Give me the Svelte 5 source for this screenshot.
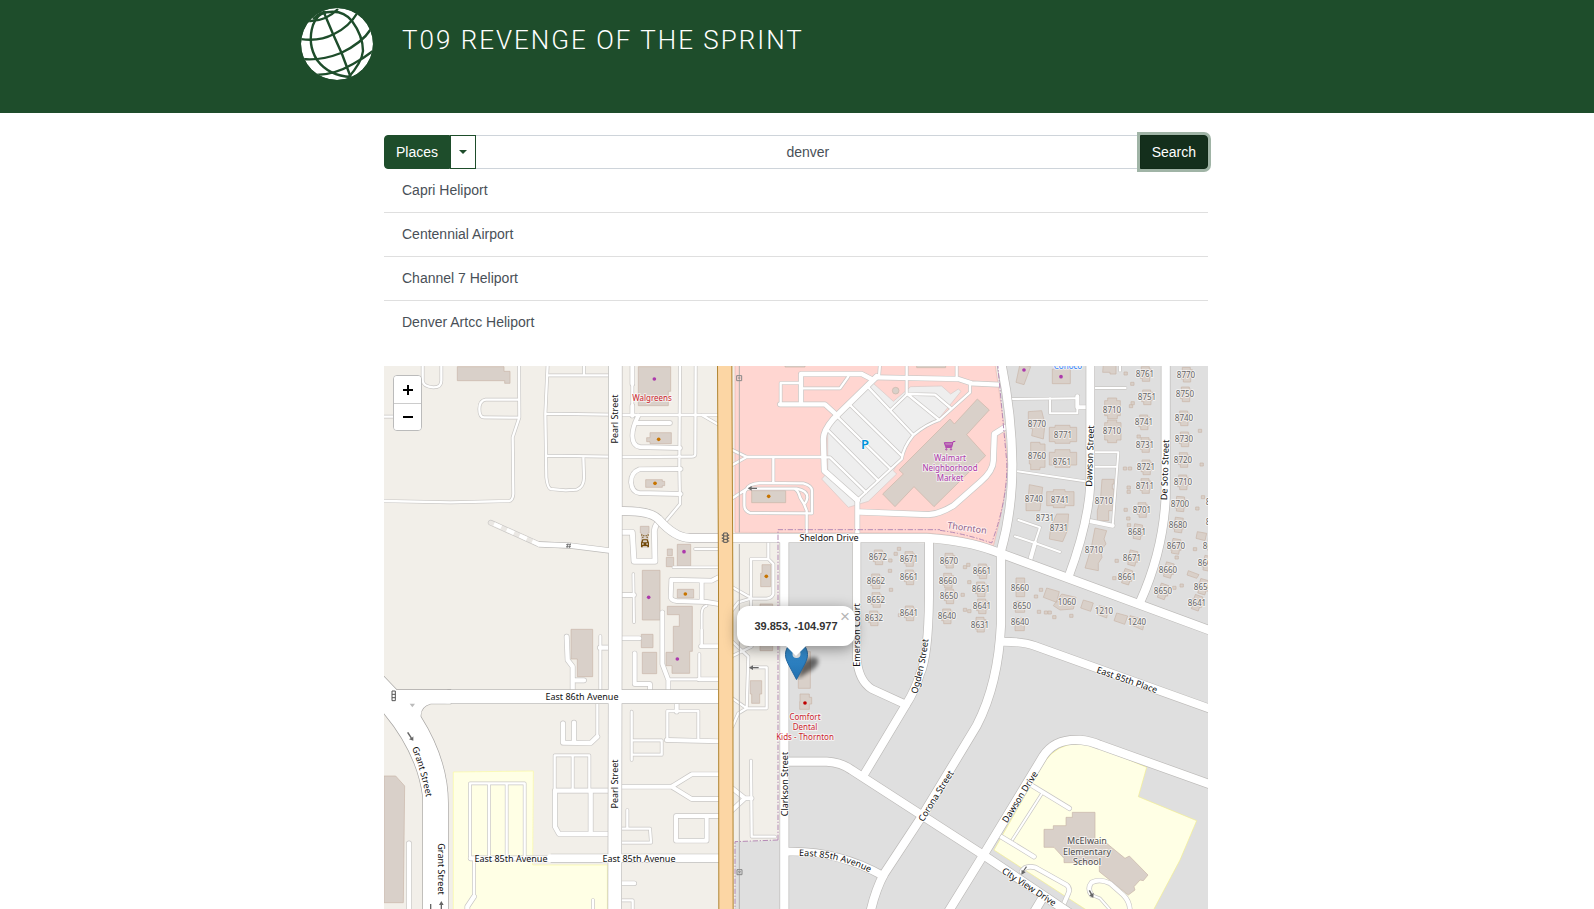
<script>
  let query = $state('denver');
  const places = ['Capri Heliport', 'Centennial Airport', 'Channel 7 Heliport', 'Denver Artcc Heliport'];

  // Survey sheets: each one has its own origin and is drawn at a third of its units.
  const sheets = {
    A: [384, 364], B: [600, 364], C: [780, 364], D: [980, 364],
    E: [384, 630], F: [600, 630], G: [780, 630], H: [980, 630]
  };
  const place = (s) => `translate(${sheets[s][0]} ${sheets[s][1]}) scale(${1 / 3})`;
  const px = (s, x) => Math.round(sheets[s][0] + x / 3);
  const py = (s, y) => Math.round(sheets[s][1] + y / 3);

  // [sheet, width, path]
  const service = [
    ['A', 7, 'M116 0V50Q118 68 148 70Q172 70 172 50V0M405 0L406 160L386 220L388 390Q386 410 375 411L200 415L0 411M405 107H305Q286 110 286 135Q286 160 300 160L405 161M0 158H30'],
    ['A', 7, 'M491 0L484 150L487 340Q490 370 500 375L545 379L578 377Q600 370 600 340L598 278M495 34H675M600 0V34M484 149L675 152M487 275L675 278'],
    ['B', 7, 'M240 0L238 310L240 420L200 468M68 153H352M287 0L286 270Q286 278 275 278L66 279M305 153L352 180M97 60V125'],
    ['B', 12, 'M97 0V60M97 125V155M115 155Q97 190 97 215Q97 245 120 249L240 252M105 177H210M242 315L118 316Q93 325 93 355Q96 385 118 387L242 390'],
    ['B', 15, 'M68 505H97L102 592H165L163 500Q165 485 175 475'],
    ['B', 6, 'M285 555H357M220 610H357M100 630L102 775M320 725Q305 728 305 750V845'],
    ['B', 12, 'M68 693H102M187 745V900L205 948V978M66 823H118M355 640L335 650L214 647L212 700Q215 710 230 711L320 714L357 720M305 650V712'],
    ['B', 7, 'M397 258L440 279L397 303M440 279H665M520 279V357M397 403L440 375Q445 360 480 357L610 358Q636 365 636 380V448L450 447Q433 440 433 425V390Q433 380 440 375M445 374H590Q622 380 622 400Q620 415 612 420L620 440V505M585 375Q595 380 600 400L612 420'],
    ['B', 7, 'M505 535V585M453 730V585H505L520 600V690Q515 703 500 704L455 703L397 670M455 703L415 715L397 738'],
    ['C', 13, 'M0 121H135L172 155M63 120V30H245L280 48M290 40L535 45L575 58L655 62M232 408V510'],
    ['C', 7, 'M300 0L297 38M380 0V90M530 0V45M2 121V57H60M65 73H180L205 38'],
    ['C', 7, 'M265 70L400 213M212 125L365 275M172 158L332 315M145 200L295 350M125 280H150L258 385M232 408L365 285Q370 250 400 213Q440 180 478 168L570 85V62M332 138L382 90L465 92L512 132M382 90L478 168'],
    ['C', 16, 'M290 38L160 165Q130 200 130 225L133 320L232 408M240 444L445 452Q480 450 520 425L600 355Q640 320 640 290L643 210L675 190'],
    ['D', 6, 'M92 105L290 103M210 103V148H292V130M345 72H437M420 0V20M113 322L315 352M345 265H415L398 485M345 308H412M115 468L180 490L165 535M105 517L165 537L240 564'],
    ['D', 12, 'M292 97V130H320M398 485L325 470M165 537L150 590'],
    ['E', 13, 'M548 20L551 90L566 110V180M575 151H600M648 53H675M640 320L620 339L537 338V280M570 278V338M675 482H513V590L525 612H675M620 482V612M260 685H490M75 640V845M270 800L250 830V845'],
    ['E', 7, 'M649 18V180M640 221V320M512 376H616V480M512 376V480M566 376V480M422 680V460H258V685M315 460V680M368 460V680M270 690V800M627 810V845'],
    ['F', 7, 'M305 0V48M205 148H297M298 72V148M95 245V390M95 331H185V374H95M295 325V243H202V325M82 540V594M66 596H150L153 638H66M66 811H98V845M453 392L455 620H525M397 205L440 235L415 250L397 290M440 235H500V112H455M440 235L445 80L397 35M397 78L455 50'],
    ['F', 12, 'M303 49H357M297 148H357M104 70V162H150V180M230 221V245M200 330L357 334M66 470H215L275 433H357M215 470L275 507H357M357 558H228V632H320V558M66 760H103M397 475L435 505L397 540M435 505H455'],
    ['H', 12, 'M145 460L268 535M55 615L162 680M125 725Q135 705 165 712L260 765Q272 775 265 790L250 825M335 795Q320 775 335 757Q360 745 390 760L430 795Q450 815 450 845'],
    ['H', 6, 'M185 492L98 628M335 795L360 805L395 845']
  ];
  const streets = [
    ['A', 14, 'M465 541L560 545L680 560'],
    ['B', 24, 'M66 441Q150 440 175 465Q225 522 270 522H357'],
    ['C', 25, 'M-143 522H440Q560 530 640 560L1300 803'],
    ['B', 25, 'M553 535V1700'],
    ['C', 23, 'M230 522V880Q235 950 275 975L378 1022'],
    ['C', 24, 'M447 522V700Q445 880 420 930Q405 980 378 1022L252 1232'],
    ['C', 25, 'M663 565V780Q655 960 590 1085L425 1358L312 1530Q285 1580 270 1650'],
    ['C', 25, 'M663 560Q697 440 697 300Q695 150 664 0'],
    ['D', 24, 'M331 0V360Q325 480 265 640'],
    ['D', 25, 'M557 0V400Q550 560 480 715'],
    ['H', 24, 'M70 35Q130 35 165 48L700 240'],
    ['G', 25, 'M25 395H140Q185 398 215 420L610 675L870 850'],
    ['G', 23, 'M20 665Q170 660 310 738'],
    ['H', 25, 'M-95 845L12 672L190 378Q225 325 300 330Q330 332 360 345L690 463M190 800L160 850'],
    ['E', 40, 'M190 200H1005'],
    ['E', 24, 'M500 685H1005'],
    ['A', 39, 'M694 0V660L692 1700']
  ];
  const grant = 'M-20 120L0 140L38 180H200V221H140Q108 230 110 260Q192 390 192 520V860H117V500Q100 370 0 250L-20 230Z';

  const buildings = [
    ['A', 'M220 8H360V22H378V58H362V50H220ZM561 796H626V938H580V885H561Z'],
    ['B', 'M115 8H212V82H205V125H115ZM150 206H214V239H150V233H140V221H150ZM137 347H187V352H194V365H187V370H137ZM121 487H147V507H144V549H124V507H121ZM202 555H217V575H202ZM199 580H221V608H199ZM232 541H272V606H232ZM127 619H180V768H127ZM232 676H281V702H232Z'],
    ['B', 'M202 727H277V862H269V928H216V905H198V865H220V787H238V752H202ZM124 811H159V851H124ZM127 865H170V929H127ZM455 380H557V416H455ZM486 602H512V668H482V628H486ZM480 720H518V860H480Z'],
    ['F', 'M451 152H485V192H479V220H455V192H451ZM595 65H631V175H595ZM600 192H628V202H635V222H628V238H599V215H600Z'],
    ['C', 'M592 105L628 138L560 212L617 275L462 428L402 368L345 428L308 390L370 330L357 318L510 165L523 180ZM15 0H75V9H15ZM410 0H497V11H410Z'],
    ['D', 'M120 0L152 8L132 62L108 55ZM217 15H271V59H217ZM370 0H408V30H390V25H368ZM145 143L185 140L195 180L190 225L155 215L158 195L145 190ZM208 190H225V184H270V190H290V233H270V238H225V233H208ZM152 235H180V240H195V310H180V317H152V300H148V265H152ZM208 265H225V257H270V265H290V303H270V310H225V303H208ZM148 362L188 370L180 440H138V400H145ZM200 383H220V377H255V383H282V425H255V431H220V425H200ZM230 450L266 450L262 500L248 533L208 525L212 490Z'],
    ['D', 'M383 102H410V110H421V155H412V164H383V155H374V110H383ZM383 168H410V176H423V228H410V236H383V228H374V176H383ZM366 346H402V360H397V375H402V400H394V420H398V440H386V470H352V440L362 400ZM345 492L380 500L372 525L378 540L362 560L366 580L355 598V620L315 612L325 580L335 545Z'],
    ['D', 'M200 672L238 683L230 715L190 700ZM310 708L340 717L332 742L302 732ZM410 747L443 756L434 781L402 770ZM358 725L385 732L380 762L350 750ZM450 755L495 768L488 798L448 780ZM245 690L288 700L280 735L240 738L220 725ZM625 620L657 632L650 643L621 633ZM652 503L680 508L675 530L648 523ZM108 642H134V698H108ZM106 712H134V745H106ZM105 762H133V800H105Z'],
    ['E', 'M0 438H35L62 468L58 818H0Z'],
    ['H', 'M277 547H345V640H380L435 685L448 678L504 735L490 752L480 750L462 770L465 780L445 795L358 725V690H345V698H252V685L222 652H192V598H220V587H258V562H277Z']
  ];
  const sheds = [
    ['C', 326, 585], ['C', 342, 565], ['C', 352, 550], ['C', 325, 616], ['C', 328, 673], ['C', 550, 605], ['C', 560, 598], ['C', 563, 650], ['C', 543, 688], ['C', 550, 733], ['C', 563, 737], ['C', 355, 749],
    ['D', 432, 24], ['D', 452, 55], ['D', 448, 122], ['D', 453, 113], ['D', 471, 213], ['D', 430, 309], ['D', 445, 309], ['D', 441, 366], ['D', 441, 379], ['D', 432, 433], ['D', 440, 459], ['D', 442, 479], ['D', 405, 586], ['D', 398, 638], ['D', 655, 196], ['D', 660, 297], ['D', 664, 395], ['D', 647, 429], ['D', 640, 551], ['D', 585, 576], ['D', 578, 667], ['D', 600, 660], ['D', 178, 673], ['D', 163, 693], ['D', 172, 739], ['D', 193, 741], ['D', 204, 741], ['D', 218, 755], ['D', 269, 751]
  ];
  // [sheet, x, y, number, has its own house footprint, tilt]
  const houses = [
    ['C', 295, 580, '8672', 1], ['C', 387, 585, '8671', 1], ['C', 287, 652, '8662', 1], ['C', 388, 640, '8661', 1], ['C', 288, 708, '8652', 1], ['C', 388, 748, '8641', 1], ['C', 281, 763, '8632', 1],
    ['C', 507, 590, '8670', 1], ['C', 607, 622, '8661', 1], ['C', 503, 650, '8660', 1], ['C', 602, 676, '8651', 1], ['C', 508, 697, '8650', 1], ['C', 605, 727, '8641', 1], ['C', 500, 757, '8640', 1], ['C', 600, 782, '8631', 1],
    ['D', 496, 30, '8761', 1], ['D', 619, 32, '8770', 1], ['D', 500, 100, '8751', 1], ['D', 616, 91, '8750', 1], ['D', 397, 137, '8710', 0], ['D', 491, 175, '8741', 1], ['D', 611, 163, '8740', 1], ['D', 397, 202, '8710', 0], ['D', 495, 243, '8731', 1], ['D', 613, 226, '8730', 1],
    ['D', 170, 180, '8770', 0], ['D', 248, 212, '8771', 0], ['D', 170, 276, '8760', 0], ['D', 247, 294, '8761', 0], ['D', 498, 310, '8721', 1], ['D', 610, 288, '8720', 1], ['D', 495, 366, '8711', 1], ['D', 608, 355, '8710', 1],
    ['D', 161, 406, '8740', 0], ['D', 240, 407, '8741', 0], ['D', 195, 462, '8731', 0], ['D', 238, 492, '8731', 0], ['D', 373, 410, '8710', 0], ['D', 486, 438, '8701', 1], ['D', 600, 420, '8700', 1, 5], ['D', 595, 483, '8680', 1, 8],
    ['D', 472, 503, '8681', 1, 10], ['D', 343, 558, '8710', 0], ['D', 587, 547, '8670', 1, 10], ['D', 457, 582, '8671', 1, 14], ['D', 440, 638, '8661', 1, 18], ['D', 565, 618, '8660', 1, 16], ['D', 548, 682, '8650', 1, 20],
    ['D', 668, 668, '8650', 1, 16], ['D', 650, 716, '8641', 1, 20], ['D', 121, 671, '8660', 0], ['D', 125, 726, '8650', 0], ['D', 119, 773, '8640', 0], ['D', 260, 715, '1060', 0], ['D', 372, 742, '1210', 0], ['D', 470, 775, '1240', 0],
    ['D', 704, 415, '8691', 1], ['D', 706, 473, '8681', 1], ['D', 697, 545, '8671', 1], ['D', 682, 598, '8661', 1, 12]
  ];
  // [sheet, x, y, angle, name]
  const names = [
    ['A', 694, 165, -90, 'Pearl Street'], ['E', 693, 462, -90, 'Pearl Street'], ['E', 594, 201, 0, 'East 86th Avenue'], ['E', 380, 686, 0, 'East 85th Avenue'], ['E', 764, 686, 0, 'East 85th Avenue'],
    ['E', 170, 717, 90, 'Grant Street'], ['C', 147, 523, 0, 'Sheldon Drive'], ['F', 555, 463, -90, 'Clarkson Street'], ['C', 232, 812, -90, 'Emerson Court'],
    ['G', 468, 497, -58, 'Corona Street'], ['H', 120, 502, -58, 'Dawson Drive'], ['H', 440, 150, 19, 'East 85th Place'], ['H', 148, 770, 33, 'City View Drive'],
    ['D', 329, 277, -88, 'Dawson Street'], ['D', 554, 317, -88, 'De Soto Street']
  ];
  const pois = [
    ['B', 155, 101, 'Walgreens', 'red'], ['F', 615, 261, 'Comfort', 'red'], ['F', 615, 291, 'Dental', 'red'], ['F', 615, 321, 'Kids - Thornton', 'red'],
    ['C', 509, 283, 'Walmart', 'violet'], ['C', 509, 313, 'Neighborhood', 'violet'], ['C', 509, 343, 'Market', 'violet'],
    ['D', 265, 6, 'Conoco', 'blue'], ['H', 320, 632, 'McElwain', 'grey'], ['H', 320, 665, 'Elementary', 'grey'], ['H', 320, 697, 'School', 'grey']
  ];
  const dots = [
    ['B', 163, 45, '#ac39ac'], ['B', 176, 226, '#c77400'], ['B', 165, 358, '#c77400'], ['B', 256, 690, '#c77400'], ['B', 506, 397, '#c77400'], ['B', 499, 637, '#c77400'],
    ['B', 252, 563, '#ac39ac'], ['B', 146, 700, '#ac39ac'], ['F', 232, 87, '#ac39ac'], ['F', 615, 219, '#bf0000'], ['D', 132, 18, '#ac39ac'], ['D', 243, 38, '#ac39ac']
  ];
</script>

<div class="page">
  <header>
    <div class="bar">
      <svg class="logo" viewBox="0 0 72 72" aria-hidden="true">
        <circle cx="36" cy="36" r="36" fill="#fff" />
        <g fill="none" stroke="#1e4d2b" stroke-width="2.4">
          <path d="M21 0L32 26L41 46L50 70" />
          <path d="M25 4Q16 6 12 17Q6 36 16 52Q28 68 50 69" />
          <path d="M19 6Q40 -1 51 13Q62 28 62 43Q61 54 47 70" />
          <path d="M7 13Q24 14 37 1" />
          <path d="M-1 31Q18 34 33 26Q48 19 57 4" />
          <path d="M1 51Q20 53 40 45Q61 35 70 21" />
          <path d="M15 67Q33 67 52 56Q63 50 72 43" />
          <path d="M12 11L20 4" />
        </g>
      </svg>
      <h1>T09 REVENGE OF THE SPRINT</h1>
    </div>
  </header>

  <main>
    <form class="search" onsubmit={(e) => e.preventDefault()}>
      <button type="button" class="kind">Places</button>
      <button type="button" class="toggle" aria-label="Choose search type"><span class="caret"></span></button>
      <input type="text" aria-label="Search text" bind:value={query} />
      <button type="submit" class="go">Search</button>
    </form>

    <ul class="results">
      {#each places as p}
        <li>{p}</li>
      {/each}
    </ul>

    <section class="map" aria-label="Map">
      <svg class="tiles" viewBox="384 366 824 543" preserveAspectRatio="xMidYMin slice">
        <rect x="0" y="0" width="1600" height="1600" fill="#f2efe9" />
        <g stroke-width="2">
          <path transform={place('C')} d="M5 520L640 547L690 300L650 0H1300V1700H5Z" fill="#dfdfdf" />
          <path transform={place('F')} d="M405 635L545 630V850H405Z" fill="#dfdfdf" />
          <path transform={place('C')} d="M-135 0H645L672 180L683 290Q680 400 640 547Q560 515 440 507L-135 505Z" fill="#ffd6d1" stroke="#e8b9b3" />
          <path transform={place('C')} d="M280 58L340 112L392 68L485 66L512 90L535 75L543 82L480 160L400 210L360 285L340 320L350 330L265 412L205 430L125 345L143 325V190Z" fill="#eee" stroke="#d8c8c6" />
          <path transform={place('E')} d="M208 426L448 423L446 705H670V860H208Z" fill="#ffffe5" stroke="#fafaa0" />
          <path transform={place('H')} d="M42 660L190 400Q230 340 300 340Q330 340 360 352L500 412L475 500L650 572L600 690L515 850H335Z" fill="#ffffe5" stroke="#f5f08c" />
        </g>
        <g fill="#d9d0c9" stroke="#c8b5a8" stroke-width="2">
          {#each buildings as [s, d]}<path transform={place(s)} {d} />{/each}
          {#each sheds as [s, x, y]}<path transform={place(s)} d="M{x} {y}h10v9h-10z" />{/each}
          {#each houses as [s, x, y, n, own, tilt]}
            {#if own}<path transform="{place(s)} rotate({tilt ?? 0} {x} {y})" d="M{x - 12} {y - 22}h24v7h6v24h-5v13h-22v-9h-6v-20h3z" />{/if}
          {/each}
          <circle transform={place('C')} cx="347" cy="80" r="10" />
        </g>

        <g fill="none" stroke-linecap="round" stroke-linejoin="round">
          {#each service as [s, w, d]}<path transform={place(s)} {d} stroke="#c9c7c5" stroke-width={w + 4} />{/each}
          {#each service as [s, w, d]}<path transform={place(s)} {d} stroke="#fff" stroke-width={w} />{/each}
        </g>
        <g fill="none" stroke-linejoin="round">
          <path transform={place('A')} d="M320 476L465 541L560 545" stroke="#c9c7c5" stroke-width="17" stroke-linecap="round" />
          <path transform={place('A')} d="M320 476L465 541L560 545" stroke="#ebe8e4" stroke-width="13" stroke-linecap="round" />
          <path transform={place('A')} d="M330 480L465 541L560 545" stroke="#fff" stroke-width="12" stroke-dasharray="24 18" />
          {#each streets as [s, w, d]}<path transform={place(s)} {d} stroke="#bdbbb9" stroke-width={w + 4} />{/each}
          <path transform={place('E')} d={grant} stroke="#a9a7a5" stroke-width="4" />
          {#each streets as [s, w, d]}<path transform={place(s)} {d} stroke="#fff" stroke-width={w} stroke-linecap="round" />{/each}
          <path transform={place('E')} d={grant} fill="#fff" />
          <path transform={place('B')} d="M418 0V505M418 540V1700" stroke="#b3b0ae" stroke-width="3" />
          <path transform={place('B')} d="M374 0L377 660L378 1700" stroke="#b08430" stroke-width="46" />
          <path transform={place('B')} d="M374 0L377 660L378 1700" stroke="#fcd6a4" stroke-width="40" />
          <g stroke="#b58ab5" stroke-width="3" stroke-dasharray="16 5 4 5">
            <path transform={place('B')} d="M534 1428V497H1020M534 1428L405 1433V1700" />
            <path transform={place('C')} d="M480 499Q560 510 635 537Q685 400 680 290L653 0" />
          </g>
        </g>

        <g fill="#666" stroke="none">
          <path transform={place('B')} d="M443 373l12-7v5h16v4h-16v5z" />
          <path transform={place('F')} d="M447 113l12-7v5h17v4h-17v5z" />
          <path transform={place('E')} d="M88 332l-13-4 5-3-11-17 4-2 11 17 4-4zM172 813l7 12h-5v20h-4v-20h-5zM138 822h4v23h-4z" />
          <path transform={place('E')} d="M77 221h16l-8 11z" fill="#bbb" />
          <path transform={place('H')} d="M124 734l1-15 4 3 9-13 3 2-9 13 5 3zM340 803l-12-6 4-4-6-11 4-2 6 11 5-2z" />
        </g>
        <g fill="none" stroke="#555" stroke-width="3">
          <path transform={place('B')} d="M371 507h11v28h-11zM367 511v5M367 520v5M367 529v4M386 511v5M386 520v5M386 529v4M371 516h11M371 526h11" />
          <path transform={place('E')} d="M24 183h10v29h-10zM24 193h10M24 203h10" />
          <path transform={place('B')} d="M410 35h15v15h-15zM414 42h7M411 1517h15v15h-15zM415 1521l7 7M422 1521l-7 7" stroke="#888" />
          <path transform={place('A')} d="M546 542h15M546 548h15M552 538l-3 14M559 538l-3 14" stroke-width="2" />
        </g>
        <g transform={place('B')} fill="#734a08">
          <path d="M127 526h16l4 10v14h-5v-4h-14v4h-5v-14zM130 529l-2 6h14l-2-6zM126 538v4h5v-4zM139 538v4h5v-4z" fill-rule="evenodd" />
          <path d="M124 511h3v4h-3zM130 513h3v4h-3zM137 513h3v4h-3zM143 511h3v4h-3zM127 518h3v4h-3zM140 518h3v4h-3z" />
        </g>
        <g transform={place('C')} fill="none" stroke="#ac39ac" stroke-width="3">
          <path d="M526 232l-7 1-4 17h-19M518 236h-25l4 12h18M495 240h22M496 244h20" />
          <circle cx="499" cy="256" r="2" /><circle cx="513" cy="256" r="2" />
        </g>
        {#each dots as [s, x, y, c]}<circle transform={place(s)} cx={x} cy={y} r="5.5" fill={c} />{/each}

        {#each houses as [s, x, y, n]}<text class="num" x={px(s, x)} y={py(s, y) + 3}>{n}</text>{/each}
        {#each names as [s, x, y, a, n]}
          <text class="street" transform="translate({px(s, x)} {py(s, y)}) rotate({a})" y="3">{n}</text>
        {/each}
        <path id="ave" d="M799 856Q842 856 878 877" fill="none" />
        <text class="street start"><textPath href="#ave">East 85th Avenue</textPath></text>
        <path id="ogden" d="M917 694Q926 664 930 627" fill="none" />
        <text class="street start"><textPath href="#ogden">Ogden Street</textPath></text>
        <path id="grant" d="M412 748Q421 770 427 802" fill="none" />
        <text class="street start"><textPath href="#grant">Grant Street</textPath></text>
        <text class="street town" transform="translate(967 528) rotate(8)" y="3">Thornton</text>
        {#each pois as [s, x, y, n, c]}<text class="poi {c}" x={px(s, x)} y={py(s, y) + 3}>{n}</text>{/each}
        <text class="parking" x="865" y="449">P</text>
      </svg>

      <svg class="pin" viewBox="0 0 50 41" aria-hidden="true">
        <defs>
          <linearGradient id="pinfill" x1="0" y1="0" x2="0" y2="1">
            <stop offset="0" stop-color="#3a93d4" /><stop offset="1" stop-color="#2170b0" />
          </linearGradient>
          <filter id="soft" x="-50%" y="-50%" width="200%" height="200%"><feGaussianBlur stdDeviation="2" /></filter>
        </defs>
        <path d="M13 40L17 26Q25 16 33 19Q37 25 28 31Z" fill="#000" opacity=".55" filter="url(#soft)" />
        <path d="M12.500 3C6 3 1.500 9 1.500 15.500C1.500 19 2.500 21 4 24.500L12.500 40.500L21 24.500C22.500 21 23.500 19 23.500 15.500C23.500 9 19 3 12.500 3Z" fill="url(#pinfill)" stroke="#2468a0" />
        <circle cx="12.500" cy="15" r="4" fill="#e4e4e4" />
      </svg>

      <div class="popup">
        <strong>39.853, -104.977</strong>
        <button type="button" class="close" aria-label="Close popup">×</button>
      </div>

      <div class="zoom">
        <button type="button" aria-label="Zoom in"><svg viewBox="0 0 12 12"><path d="M6 1V11M1 6H11" /></svg></button>
        <button type="button" aria-label="Zoom out"><svg viewBox="0 0 12 12"><path d="M1 6H11" /></svg></button>
      </div>
    </section>
  </main>
</div>

<style>
  :global(body) { margin: 0; background: #fff; }
  * { box-sizing: border-box; }
  .page {
    display: flex;
    flex-direction: column;
    min-height: 100vh;
    font: 14px/20px "Liberation Sans", Arial, sans-serif;
    color: #495057;
  }
  button, input { font: inherit; margin: 0; }
  header { background: #1e4d2b; height: 113px; }
  .bar { display: flex; gap: 29px; width: 100%; max-width: 992px; margin: 0 auto; padding-top: 8px; }
  .logo { width: 72px; height: 72px; flex: none; overflow: hidden; border-radius: 50%; }
  h1 {
    margin: 16px 0 0;
    font: 300 26px/32px Roboto, "Open Sans", sans-serif;
    letter-spacing: 2px;
    color: #fff;
  }
  main {
    display: flex;
    flex-direction: column;
    flex: 1;
    width: 100%;
    max-width: 826px;
    margin: 0 auto;
    padding: 22px 2px 0 0;
  }
  .search { display: flex; height: 34px; }
  .search button { border: 1px solid #1e4d2b; padding: 0 11px; color: #fff; background: #1e4d2b; }
  .search .kind { border-radius: 4px 0 0 4px; }
  .search .toggle { width: 26px; padding: 0; background: #fff; display: grid; place-items: center; }
  .caret { border: 4px solid transparent; border-top-color: #1e4d2b; border-bottom: 0; }
  .search input {
    flex: 1;
    min-width: 0;
    border: solid #ced4da;
    border-width: 1px 0;
    padding: 0 12px;
    text-align: center;
    color: #495057;
    background: #fff;
    outline: 0;
  }
  .search .go {
    border-color: #112b18;
    border-radius: 0 4px 4px 0;
    background: #142f1c;
    box-shadow: 0 0 0 3px #a0b4a6;
  }
  .results { list-style: none; margin: 0 0 22px; padding: 0; }
  li { padding: 11px 18px 12px; border-bottom: 1px solid #dfdfdf; }
  li:last-child { border-bottom: 0; }
  .map { position: relative; flex: 1; min-height: 400px; overflow: hidden; background: #ddd; }
  .tiles { position: absolute; inset: 0; width: 100%; height: 100%; }
  text {
    font-family: "Noto Sans", sans-serif;
    text-anchor: middle;
    paint-order: stroke;
    stroke: rgba(255, 255, 255, 0.6);
    stroke-width: 2px;
    stroke-linejoin: round;
  }
  .num { font-size: 8px; fill: #666; }
  .street { font-size: 9px; fill: #111; }
  .start { text-anchor: start; }
  .town { fill: #8d618b; }
  .poi { font-size: 8px; }
  .red { fill: #cc1f2f; }
  .violet { fill: #ac39ac; }
  .blue { fill: #2a7fff; }
  .grey { font-size: 9px; fill: #4d4d4d; }
  .parking { font-size: 13px; font-weight: 600; fill: #0092da; }
  .pin { position: absolute; left: calc(50% - 12px); top: 273px; width: 50px; height: 41px; }
  .popup {
    position: absolute;
    left: calc(50% - 59px);
    top: 240px;
    width: 118px;
    height: 40px;
    display: grid;
    place-items: center;
    border-radius: 12px;
    background: #fff;
    color: #333;
    font-size: 11px;
    box-shadow: 0 3px 14px rgba(0, 0, 0, 0.4);
  }
  .popup::after {
    content: "";
    position: absolute;
    top: 100%;
    left: 49px;
    border: 10px solid transparent;
    border-top-color: #fff;
    border-bottom: 0;
  }
  .close {
    position: absolute;
    right: 2px;
    top: 3px;
    width: 16px;
    height: 16px;
    border: 0;
    padding: 0;
    background: none;
    color: #b5b5b5;
    font-size: 17px;
    line-height: 16px;
  }
  .zoom {
    position: absolute;
    left: 9px;
    top: 9px;
    width: 29px;
    border: 1px solid #bbb;
    border-radius: 4px;
    background: #fff;
    overflow: hidden;
  }
  .zoom button { display: grid; place-items: center; width: 100%; height: 27px; padding: 0; border: 0; background: #fff; }
  .zoom button + button { border-top: 1px solid #ccc; }
  .zoom svg { width: 12px; height: 12px; }
  .zoom path { stroke: #000; stroke-width: 2; fill: none; }
</style>
